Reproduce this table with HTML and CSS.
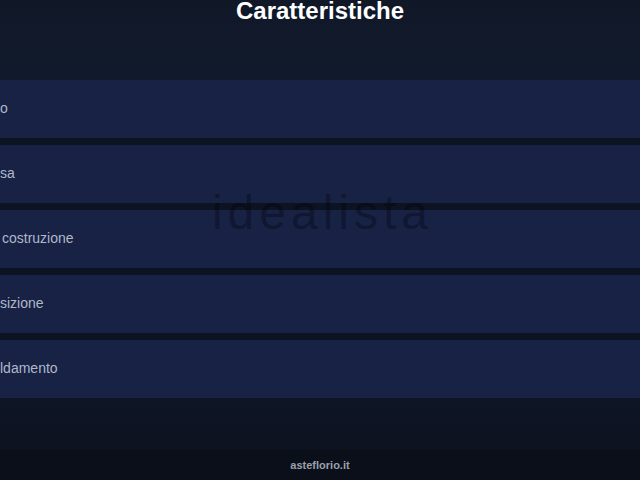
FILE: index.html
```html
<!DOCTYPE html>
<html lang="it">
<head>
<meta charset="utf-8">
<title>Caratteristiche</title>
<link rel="stylesheet" href="styles.css">
</head>
<body>
<div class="page">
  <h1 class="title">Caratteristiche</h1>
  <div class="list">
    <div class="row"><span class="label">o</span></div>
    <div class="row"><span class="label">sa</span></div>
    <div class="row"><span class="label shift">costruzione</span></div>
    <div class="row"><span class="label">sizione</span></div>
    <div class="row"><span class="label">ldamento</span></div>
    <div class="watermark">idealista</div>
  </div>
  <div class="spacer"></div>
  <footer class="footer">asteflorio.it</footer>
</div>
</body>
</html>
```

FILE: styles.css
```css
* { box-sizing: border-box; }
html, body { margin: 0; padding: 0; }
body {
  width: 640px;
  height: 480px;
  overflow: hidden;
  background: #111a2b;
  font-family: "Liberation Sans", Arial, sans-serif;
}
.page {
  display: flex;
  flex-direction: column;
  height: 480px;
}
.title {
  margin: 0;
  height: 80px;
  padding-top: 0;
  text-align: center;
  color: #ffffff;
  font-size: 24px;
  font-weight: bold;
  line-height: 22px;
  background: linear-gradient(#101828, #111a2c);
}
.list {
  position: relative;
  display: flex;
  flex-direction: column;
  gap: 7px;
  background: #0c1322;
}
.row {
  height: 58px;
  background: #172245;
  display: flex;
  align-items: center;
}
.label {
  color: #b0b8ca;
  font-size: 14px;
  padding-left: 0;
  padding-bottom: 3px;
}
.label.shift { padding-left: 2px; }
.watermark {
  position: absolute;
  left: 0;
  right: 0;
  top: 105px;
  text-align: center;
  font-size: 48px;
  line-height: 56px;
  letter-spacing: 5px;
  padding-left: 5px;
  color: rgba(0, 0, 0, 0.3);
}
.spacer {
  flex: 1;
  background: linear-gradient(#0e1525, #0c1220);
}
.footer {
  height: 30px;
  background: #0a0f1a;
  color: #9aa0ad;
  font-size: 11px;
  font-weight: bold;
  text-align: center;
  line-height: 30px;
}
```
